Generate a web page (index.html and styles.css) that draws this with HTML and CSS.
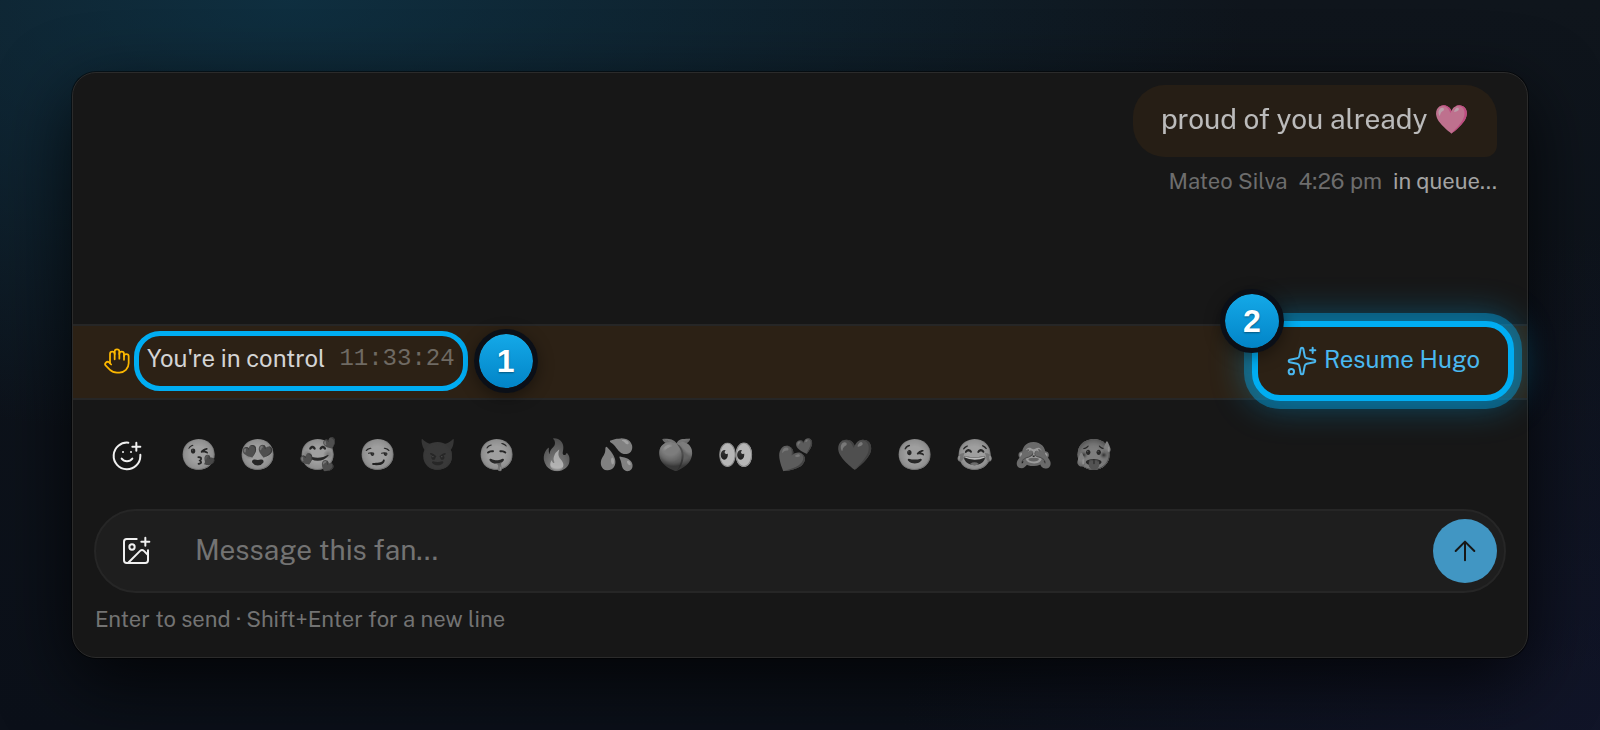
FILE: index.html
```html
<!DOCTYPE html>
<html lang="en">
<head>
  <meta charset="UTF-8" />
  <meta name="viewport" content="width=device-width, initial-scale=1.0"/>
  <title>Resume Hugo</title>
  <link rel="stylesheet" href="styles.css">
</head>
<body>

  <main class="chat-card">

    <section class="messages" aria-label="Conversation">
      <p class="bubble">proud of you already 🩷</p>
      <div class="message-meta">
        <span>Mateo Silva</span>
        <span>4:26 pm</span>
        <span class="status">in queue...</span>
      </div>
    </section>

    <section class="control-bar" aria-label="Control status">
      <svg class="icon hand" viewBox="0 0 24 24" aria-hidden="true">
        <path d="M18 11V6a2 2 0 0 0-4 0"/>
        <path d="M14 10V4a2 2 0 0 0-4 0v2"/>
        <path d="M10 10.5V6a2 2 0 0 0-4 0v8"/>
        <path d="M18 8a2 2 0 1 1 4 0v6a8 8 0 0 1-8 8h-2c-2.8 0-4.5-.86-5.99-2.34l-3.6-3.6a2 2 0 0 1 2.83-2.82L7 15"/>
      </svg>
      <div class="control-state">
        <span class="control-label">You're in control</span>
        <span class="control-time">11:33:24</span>
      </div>
      <span class="step">1</span>
      <div class="resume-wrap">
        <button class="resume" type="button">
          <svg class="icon" viewBox="0 0 24 24" aria-hidden="true">
            <path d="M11.017 2.814a1 1 0 0 1 1.966 0l1.051 5.558a2 2 0 0 0 1.594 1.594l5.558 1.051a1 1 0 0 1 0 1.966l-5.558 1.051a2 2 0 0 0-1.594 1.594l-1.051 5.558a1 1 0 0 1-1.966 0l-1.051-5.558a2 2 0 0 0-1.594-1.594l-5.558-1.051a1 1 0 0 1 0-1.966l5.558-1.051a2 2 0 0 0 1.594-1.594z"/>
            <path d="M20 2v4M22 4h-4"/>
            <circle cx="4" cy="20" r="2"/>
          </svg>
          <span>Resume Hugo</span>
        </button>
        <span class="step step-corner">2</span>
      </div>
    </section>

    <section class="emoji-bar" aria-label="Quick emojis">
      <button class="icon-button" type="button" aria-label="More emojis">
        <svg class="icon" viewBox="0 0 24 24" aria-hidden="true">
          <path d="M22 11v1a10 10 0 1 1-9-10"/>
          <path d="M8 14s1.5 2 4 2 4-2 4-2"/>
          <path d="M9 9h.01M15 9h.01"/>
          <path d="M16 5h6M19 2v6"/>
        </svg>
      </button>
      <div class="emoji-list">
        <button type="button">😘</button>
        <button type="button">😍</button>
        <button type="button">🥰</button>
        <button type="button">😏</button>
        <button type="button">😈</button>
        <button type="button">🤤</button>
        <button type="button">🔥</button>
        <button type="button">💦</button>
        <button type="button">🍑</button>
        <button type="button">👀</button>
        <button type="button">💕</button>
        <button type="button">❤️</button>
        <button type="button">😉</button>
        <button type="button">😂</button>
        <button type="button">🙈</button>
        <button type="button">🥵</button>
      </div>
    </section>

    <form class="composer">
      <button class="icon-button" type="button" aria-label="Add image">
        <svg class="icon" viewBox="0 0 24 24" aria-hidden="true">
          <path d="M16 5h6M19 2v6"/>
          <path d="M21 11.5V19a2 2 0 0 1-2 2H5a2 2 0 0 1-2-2V5a2 2 0 0 1 2-2h7.5"/>
          <path d="m21 15-3.086-3.086a2 2 0 0 0-2.828 0L6 21"/>
          <circle cx="9" cy="9" r="2"/>
        </svg>
      </button>
      <input type="text" placeholder="Message this fan..." aria-label="Message this fan">
      <button class="send" type="submit" aria-label="Send">
        <svg class="icon" viewBox="0 0 24 24" aria-hidden="true">
          <path d="m5 12 7-7 7 7M12 19V5"/>
        </svg>
      </button>
    </form>

    <p class="hint">Enter to send · Shift+Enter for a new line</p>
  </main>

</body>
</html>
```
FILE: styles.css
```css
* {
  margin: 0;
  padding: 0;
  box-sizing: border-box;
}

body {
  min-height: 100vh;
  padding: 72px;
  background:
    radial-gradient(ellipse 960px 440px at 18% 0%, rgba(14, 70, 96, 0.52), transparent),
    radial-gradient(ellipse 700px 500px at 100% 100%, rgba(25, 27, 62, 0.4), transparent),
    linear-gradient(#0f151c, #0b1019);
  font-family: 'Public Sans', Inter, 'Liberation Sans', 'Noto Color Emoji', sans-serif;
  font-size: 24px;
  color: #d4d4d4;
}

button {
  border: none;
  background: none;
  color: inherit;
  font: inherit;
  cursor: pointer;
}

.icon {
  width: 32px;
  height: 32px;
  flex: none;
  fill: none;
  stroke: currentColor;
  stroke-width: 1.5;
  stroke-linecap: round;
  stroke-linejoin: round;
}

.chat-card {
  background-color: #171717;
  border: 1px solid #2b2b2b;
  border-radius: 24px;
  box-shadow: 0 0 0 1px rgba(0, 0, 0, 0.5), 0 24px 72px rgba(0, 0, 0, 0.75);
}

/* messages */
.messages {
  display: flex;
  flex-direction: column;
  align-items: flex-end;
  height: 251px;
  padding: 12px 30px 0;
}

.bubble {
  padding: 14px 28px 18px;
  border-radius: 32px 32px 12px 32px;
  background-color: #2c2115;
  color: #fafafa;
  font-size: 28px;
  line-height: 40px;
  opacity: 0.72;
}

.message-meta {
  display: flex;
  gap: 11px;
  margin-top: 8px;
  color: #6d6d6d;
  font-size: 22px;
  line-height: 32px;
}

.message-meta .status {
  color: #a3a3a3;
}

/* control bar */
.control-bar {
  display: flex;
  align-items: center;
  height: 76px;
  padding: 0 13px 2px 30px;
  border-top: 2px solid #262626;
  border-bottom: 2px solid #262626;
  background-color: #2c2115;
}

.hand {
  width: 28px;
  height: 28px;
  color: #fcb700;
}

.control-state {
  display: flex;
  align-items: center;
  gap: 14px;
  height: 60px;
  margin-left: 3px;
  padding: 0 8px 6px;
  border: 5px solid #00adf2;
  border-radius: 26px;
}

.control-time {
  color: #6f6a63;
  font-family: 'Liberation Mono', monospace;
}

.step {
  display: flex;
  align-items: center;
  justify-content: center;
  width: 64px;
  height: 64px;
  margin-left: 6px;
  border: 5px solid #0b0f17;
  border-radius: 50%;
  background: linear-gradient(#14a9e8, #0284c7) padding-box;
  box-shadow: 0 4px 16px rgba(0, 0, 0, 0.4);
  color: #fff;
  font-family: 'Liberation Sans', sans-serif;
  font-size: 32px;
  font-weight: bold;
  line-height: 32px;
  text-shadow: 0 1px 2px rgba(0, 0, 0, 0.4);
}

.resume-wrap {
  position: relative;
  margin-left: auto;
}

.resume {
  display: flex;
  align-items: center;
  gap: 6px;
  height: 80px;
  padding: 0 28px;
  border: 6px solid #00adf2;
  border-radius: 28px;
  background-color: #2c2115;
  box-shadow: 0 0 0 8px rgba(0, 173, 242, 0.4), 0 0 36px 4px rgba(0, 173, 242, 0.4);
  color: #4ab8f0;
}

.resume span {
  padding-bottom: 4px;
}

.step-corner {
  position: absolute;
  top: -32px;
  left: -32px;
  margin: 0;
}

/* emoji row */
.icon-button {
  display: flex;
  align-items: center;
  justify-content: center;
  width: 64px;
  height: 64px;
  color: #f0f0f0;
}

.emoji-bar {
  display: flex;
  align-items: center;
  gap: 10px;
  padding: 24px 22px 21px;
}

.emoji-list {
  display: grid;
  grid-template-columns: repeat(16, 1fr);
  width: 955px;
}

.emoji-list button {
  height: 60px;
  padding-bottom: 4px;
  font-size: 30px;
  filter: grayscale(1);
  opacity: 0.7;
}

/* message box */
.composer {
  display: flex;
  align-items: center;
  height: 84px;
  margin: 0 21px;
  padding: 0 7px 0 8px;
  border: 2px solid #262626;
  border-radius: 42px;
  background-color: #1e1e1e;
}

.composer input {
  flex: 1;
  min-width: 0;
  margin-left: 27px;
  padding-bottom: 4px;
  border: none;
  outline: none;
  background: none;
  color: #e5e5e5;
  font: inherit;
  font-size: 28px;
}

.composer input::placeholder {
  color: #737373;
  opacity: 1;
}

.send {
  display: flex;
  align-items: center;
  justify-content: center;
  width: 64px;
  height: 64px;
  border-radius: 50%;
  background-color: #4196c3;
  color: #171717;
}

.hint {
  padding: 10px 22px 22px;
  color: #737373;
  font-size: 22px;
  line-height: 32px;
}
```
